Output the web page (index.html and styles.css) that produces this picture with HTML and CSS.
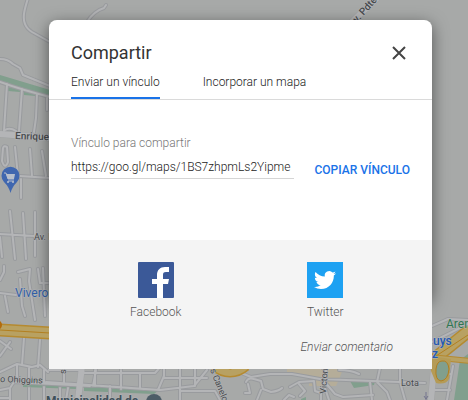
FILE: index.html
```html
<!DOCTYPE html>
<html lang="es">
<head>
    <meta charset="UTF-8">
    <meta name="viewport" content="width=device-width, initial-scale=1.0">
    <title>Compartir</title>
    <link rel="stylesheet" href="styles.css">
</head>
<body>
    <svg class="map" viewBox="0 0 468 400" preserveAspectRatio="xMidYMin slice" aria-hidden="true">
        <defs>
            <g id="streets">
                <path d="M28 -2C25 8 22 17 25 24Q27 29 32 32L50 42M0 59Q8 59 13 64L20 68L23 75L50 86M87 22Q94 11 104 8L106 5"/>
                <path d="M0 82Q22 90 50 97M7 84L4 131M22 89L19 131M37 94L36 118L34 132M5 130Q10 127 16 131M47 98V110"/>
                <path d="M3 148Q4 145 7 147L8 162Q5 170 2 161ZM15 147L18 176M30 149L32 176M42 151L46 176M20 176L50 178M21 179V198"/>
                <path d="M10 211L15 259M23 213L26 259M35 212L35 256M0 234L34 236M0 237L2 257M4 266V272L0 280"/>
                <path d="M18 272L30 269L29 281L35 320M20 279L22 306L25 316M38 269L40 283H48M43 268L45 316M0 293L16 295M5 296L8 312M0 356L10 342M0 341L11 349M24 338L22 365M40 340L38 367"/>
                <path d="M0 372L17 364L32 367L40 365L48 372M17 364V377M0 390L10 388L14 382L90 386M10 389V400M0 398H10M29 388V400M44 387V400M60 388V400M29 368V378M44 370V382M64 369V384M96 370L93 386M49 370H80M46 382L160 390M82 373L155 373L162 365M88 385L144 389M95 370V386M121 370V389M140 373V388M158 390L164 376V367M68 388L66 400M110 386V400M160 390L194 386L207 370M180 368V400M195 369V386M164 378H207M181 391H215L220 400"/>
                <path d="M234 370L251 377L270 374L292 374L320 379L425 383M326 370V379M322 379L329 400M370 382L372 400M380 368L377 382M400 369V382L405 400M339 370Q351 370 359 374M324 381L335 394L343 397L373 395M377 382L387 392L390 400"/>
                <path d="M246 382Q248 377 254 379L261 381L263 389L271 392Q279 391 282 388M248 384L250 393H245M261 390L257 400M284 400L289 395L294 397M290 387L299 382L314 381L315 391M299 384L305 391L300 396M315 391L321 393V400"/>
                <path d="M424 346L468 324M432 326L448 319L468 320M433 374H450M435 390H450M453 366L447 400M468 333L450 352"/>
            </g>
            <g id="avenues">
                <path d="M0 134L50 138M82 366L78 400M434 368L431 400M351 23L378 -3"/>
            </g>
        </defs>

        <rect class="land" width="468" height="400"/>

        <g class="park">
            <path d="M0 75L50 90V99L0 83ZM8 87L20 89V92L8 91ZM24 91L36 93V96L24 95Z"/>
            <path d="M23 384L77 384L77 389L23 387ZM84 385L160 389L154 394L84 391ZM33 379H38V382H33ZM350 381L375 381L374 385L354 388ZM301 399L306 397V400H301ZM460 360L468 354V400H454Z"/>
        </g>
        <path class="built" d="M287 366H344L340 377L336 386L309 386V375L287 373Z"/>

        <use href="#streets" class="street-case"/>
        <use href="#avenues" class="avenue-case"/>
        <use href="#streets" class="street"/>
        <use href="#avenues" class="avenue"/>

        <g class="highway">
            <path class="edge" d="M0 330L50 333"/>
            <path class="fill" d="M0 330L50 333"/>
            <path class="line" d="M0 330L50 333"/>
            <path class="edge" d="M215 365Q222 371 230 371Q238 371 245 365M430 362L470 330"/>
            <path class="fill" d="M215 365Q222 371 230 371Q238 371 245 365M430 362L470 330"/>
            <path class="side-edge" d="M430 357L470 361"/>
            <path class="side" d="M430 357L470 361"/>
            <path class="line" d="M220 364Q230 374 241 364M436 356L468 335"/>
            <path class="blob" d="M430 356L451 359L449 379Q446 385 436 383L431 371Z"/>
            <path class="ring" d="M442 361Q448 360 449 369Q448 380 441 381Q435 380 436 369Q437 361 442 361Z"/>
        </g>
        <circle class="junction" cx="-3" cy="325" r="5"/>

        <path class="pin" d="M10.500 193Q9 187 4 182A9 9 0 1 1 17 182Q12 187 10.500 193Z"/>
        <path class="basket" d="M6 174H15L14 179H8Z"/>
        <path class="cart" d="M4 173H6L8 179H14M8 181H14"/>
        <circle class="wheel" cx="8" cy="182" r="1"/>
        <circle class="wheel" cx="13" cy="182" r="1"/>
        <circle class="place" cx="154" cy="402" r="8"/>
        <path class="arrow" d="M426 392V400M424 396L426 399L428 396"/>

        <g class="place-name">
            <text class="strong" x="15" y="139" transform="rotate(2 15 139)">Enrique</text>
            <text x="34" y="240">Av. L</text>
            <text class="shop" x="15" y="297">Vivero</text>
            <text x="0" y="382" transform="rotate(2 0 382)">o Ohiggins</text>
            <text class="city" x="46" y="405">Municipalidad de</text>
            <text x="401" y="386">Lota</text>
            <text class="green" x="446" y="328">Aren</text>
            <text class="store" x="433" y="345">uys</text>
            <text class="store" x="432" y="358">z</text>
            <text class="strong" transform="translate(357 23) rotate(-48)">v. Pdte.</text>
            <text transform="translate(326 394) rotate(-86)">Victoria</text>
            <text transform="translate(210 370) rotate(68)">s Canelo</text>
            <text transform="translate(66 374) rotate(-90)">s</text>
        </g>
    </svg>

    <main class="dialog" role="dialog" aria-labelledby="title">
        <header class="dialog-header">
            <h1 id="title">Compartir</h1>
            <button class="close" type="button" aria-label="Cerrar">
                <svg viewBox="0 0 14 14"><path d="M1 1L13 13M13 1L1 13"/></svg>
            </button>
        </header>
        <nav class="tabs">
            <button class="tab active" type="button">Enviar un vínculo</button>
            <button class="tab" type="button">Incorporar un mapa</button>
        </nav>
        <section class="link-panel">
            <div class="field">
                <label for="link">Vínculo para compartir</label>
                <input id="link" type="text" value="https://goo.gl/maps/1BS7zhpmLs2Yipme" readonly>
            </div>
            <button class="copy" type="button">COPIAR VÍNCULO</button>
        </section>
        <footer class="share">
            <div class="networks">
                <a class="network" href="#facebook">
                    <svg viewBox="0 0 36 36">
                        <rect width="36" height="36" rx="1" fill="#3b5998"/>
                        <path fill="#fff" d="M19 36V22H14V17H19V13C19 8 22 5 27 5H31V10H28C25.500 10 25 11 25 13V17H31L30 22H25V36Z"/>
                    </svg>
                    <span>Facebook</span>
                </a>
                <a class="network" href="#twitter">
                    <svg viewBox="0 0 36 36">
                        <rect width="36" height="36" fill="#1da1f2"/>
                        <path fill="#fff" transform="translate(7 7) scale(.92)" d="M23.950 4.570a10 10 0 0 1-2.820.77 4.960 4.960 0 0 0 2.160-2.720c-.95.550-2 .95-3.130 1.180a4.920 4.920 0 0 0-8.380 4.480C7.690 8.100 4.070 6.130 1.640 3.160a4.820 4.820 0 0 0-.67 2.480c0 1.710.87 3.210 2.190 4.100a4.900 4.900 0 0 1-2.230-.62v.06a4.920 4.920 0 0 0 3.950 4.830 5 5 0 0 1-2.210.08 4.940 4.940 0 0 0 4.600 3.420A9.870 9.870 0 0 1 0 19.540a13.990 13.990 0 0 0 7.550 2.210c9.050 0 14-7.500 14-13.980 0-.21 0-.42-.02-.63a9.940 9.940 0 0 0 2.420-2.570z"/>
                    </svg>
                    <span>Twitter</span>
                </a>
            </div>
            <a class="feedback" href="#comentario">Enviar comentario</a>
        </footer>
    </main>
</body>
</html>
```
FILE: styles.css
```css
* { box-sizing: border-box; }
body { font-family: Roboto, Arial, sans-serif; font-size: 12px; font-weight: 300; line-height: 16px; margin: 0; padding: 20px 36px 31px 49px; min-height: 100vh; background-color: #a7a9a8; color: #222; }
button, input { font: inherit; color: inherit; background: none; border: 0; margin: 0; padding: 0; }
button { cursor: pointer; }
a { color: inherit; text-decoration: none; }

/* map */
.map { position: absolute; z-index: -2; top: 0; left: 0; width: 100%; height: 100%; font-weight: 400; }
.land { fill: #a7a9a8; }
.park { fill: #819f8d; }
.built { fill: #b5ad99; }
.street-case, .avenue-case, .street, .avenue { fill: none; stroke-linejoin: round; stroke-linecap: round; }
.street-case { stroke: #999b9e; stroke-width: 4; }
.street { stroke: #b4b5b7; stroke-width: 2; }
.avenue-case { stroke: #a0a2a4; stroke-width: 7; }
.avenue { stroke: #b4b5b7; stroke-width: 6; }
.highway path { fill: none; }
.highway .edge { stroke: #b58a30; stroke-width: 13; }
.highway .fill { stroke: #b8a162; stroke-width: 10; }
.highway .side-edge { stroke: #b58a30; stroke-width: 6; }
.highway .side { stroke: #b8a162; stroke-width: 4; }
.highway .line { stroke: #b27f20; stroke-width: 1; }
.highway .blob { fill: #b59b55; }
.highway .ring { fill: #819f8d; stroke: #b27f20; stroke-width: 1; }
.junction { fill: #b36b0c; }
.pin { fill: #4067af; }
.basket { fill: #b7bfcc; }
.cart { fill: none; stroke: #b7bfcc; stroke-width: 1; }
.wheel { fill: #b7bfcc; }
.place { fill: #4d5d67; }
.arrow { fill: none; stroke: #74758e; stroke-width: 1; }
.place-name text { font-size: 9px; fill: #474a4d; stroke: #b4b5b7; stroke-width: 1; paint-order: stroke; }
.place-name .strong { font-size: 10px; font-weight: 500; }
.place-name .shop { font-size: 12px; fill: #315fa8; }
.place-name .store { font-size: 12px; font-weight: 500; fill: #2458b0; }
.place-name .city { font-size: 12px; font-weight: 700; fill: #3f505a; }
.place-name .green { font-size: 12px; fill: #2f7550; }

/* dialog */
.dialog { position: relative; background: #fff; border-radius: 8px 8px 0 0; }
/* the shadow stops short of the footer */
.dialog::before { content: ""; position: absolute; z-index: -1; inset: 0 0 69px; border-radius: 8px; box-shadow: 0 4px 16px rgba(0, 0, 0, 0.5); }
.dialog-header { display: flex; align-items: center; justify-content: space-between; padding: 20px 22px 0; }
.dialog-header h1 { margin: 0; color: #333; font-size: 18px; font-weight: 400; line-height: 26px; }
.close { display: flex; align-items: center; justify-content: center; width: 22px; height: 26px; }
.close svg { width: 14px; height: 14px; fill: none; stroke: #444; stroke-width: 2; }
.tabs { display: flex; gap: 43px; padding: 0 22px; border-bottom: 1px solid #dadada; }
.tab { height: 33px; padding: 0; border-bottom: 2px solid transparent; white-space: nowrap; }
.tab.active { border-bottom-color: #1a73e8; }
.link-panel { display: flex; align-items: flex-end; gap: 21px; padding: 35px 22px 61px; }
.field { display: flex; flex-direction: column; flex: 1; min-width: 0; }
.field label { color: #777; }
.field input { width: 100%; height: 28px; padding-top: 4px; border-bottom: 1px solid #d5d5d5; outline: 0; }
.copy { padding-bottom: 1px; color: #1a73e8; font-weight: 500; white-space: nowrap; }
.share { background: #f4f4f4; padding: 22px 22px 14px; color: #555; }
.networks { display: grid; grid-template-columns: 1fr 1fr; }
.network { display: flex; flex-direction: column; align-items: center; gap: 6px; }
.network svg { width: 36px; height: 36px; }
.feedback { display: block; margin: 19px 17px 0; text-align: right; font-style: italic; }
```
